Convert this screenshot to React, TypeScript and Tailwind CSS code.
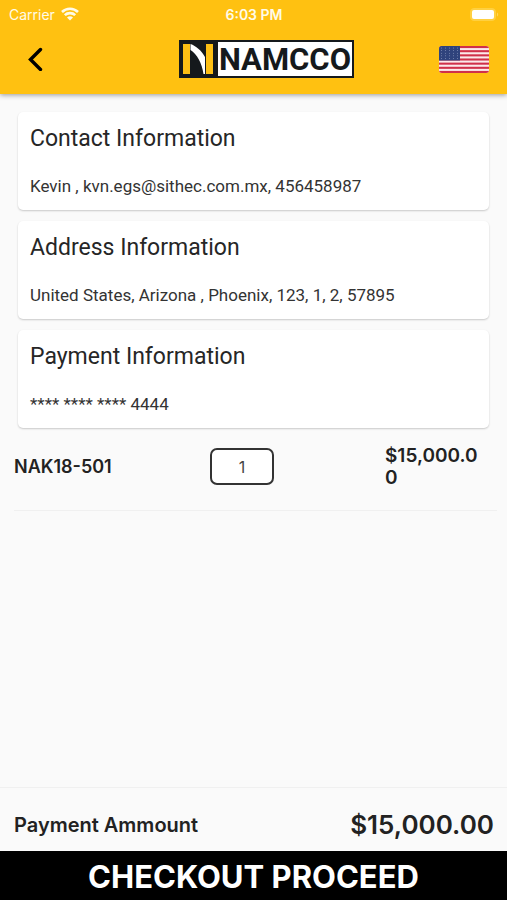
import { useState } from 'react';

const sections = [
  { title: 'Contact Information', detail: 'Kevin , kvn.egs@sithec.com.mx, 456458987' },
  { title: 'Address Information', detail: 'United States, Arizona , Phoenix, 123, 1, 2, 57895' },
  { title: 'Payment Information', detail: '**** **** **** 4444' },
];

function WifiIcon() {
  return (
    <svg width="18" height="14" viewBox="0 0 18 14" aria-hidden="true">
      <g fill="none" stroke="#fffbe8" strokeWidth="2.6">
        <path d="M1 5 C5.500 .6 12.500 .6 17 5" />
        <path d="M3.800 8.200 C6.600 5.400 11.400 5.400 14.200 8.200" />
      </g>
      <path d="M6 10.400 C7.700 8.900 10.300 8.900 12 10.400 L9 13.400 Z" fill="#fffbe8" />
    </svg>
  );
}

function BatteryIcon() {
  return (
    <svg width="29" height="13" viewBox="0 0 29 13" aria-hidden="true">
      <rect x=".5" y=".5" width="25" height="12" rx="3.500" fill="#ffd040" stroke="#ffd040" />
      <rect x="2" y="2" width="22" height="9" rx="2" fill="#fff" />
      <path d="M27 4.500 C28.600 5.200 28.600 7.800 27 8.500 Z" fill="#ffd65c" />
    </svg>
  );
}

function Logo() {
  return (
    <svg width="175" height="38" viewBox="0 0 175 38" role="img" aria-label="Namcco">
      <rect width="175" height="38" fill="#15191c" />
      <rect x="39" y="2" width="134" height="34" fill="#fff" />
      <rect x="4" y="4" width="7" height="30" fill="#fdbf14" />
      <rect x="27" y="4" width="7" height="30" fill="#fdbf14" />
      <path d="M11.500 4 C17 6 22 10 26 17 V34 H24.500 C23 23 18 14 11.500 10 Z" fill="#fff" />
      <text
        x="106"
        y="30"
        textAnchor="middle"
        className="font-[Roboto,sans-serif] text-[31px] font-bold"
        fill="#15191c"
      >
        NAMCCO
      </text>
    </svg>
  );
}

function UsFlag() {
  return (
    <svg width="50" height="27" viewBox="0 0 50 27" aria-hidden="true">
      <clipPath id="flag">
        <rect width="50" height="27" rx="3" />
      </clipPath>
      <g clipPath="url(#flag)">
        <rect width="50" height="27" fill="#fbe9ea" />
        {Array.from({ length: 7 }, (_, i) => (
          <rect key={i} y={(i * 54) / 13} width="50" height={27 / 13} fill="#d0304a" />
        ))}
        <rect width="21" height="14.500" fill="#2f437c" />
        {Array.from({ length: 25 }, (_, i) => (
          <circle key={i} cx={2.5 + (i % 5) * 4} cy={2 + Math.floor(i / 5) * 2.6} r=".5" fill="#8290b8" />
        ))}
      </g>
    </svg>
  );
}

function Header() {
  return (
    <header className="bg-[#ffc111] shadow-[0_1px_5px_rgba(0,0,0,0.4)]">
      <div className="grid h-7 grid-cols-3 items-center pr-2 pl-[9px] text-[14px] text-[#fffbe8]">
        <div className="flex items-center gap-[6px]">
          <span>Carrier</span>
          <WifiIcon />
        </div>
        <span className="text-center font-semibold">6:03 PM</span>
        <div className="flex justify-end">
          <BatteryIcon />
        </div>
      </div>
      <div className="flex h-[66px] items-center justify-between pr-[18px] pb-1 pl-[26px]">
        <button type="button" aria-label="Back" className="w-[68px]">
          <svg width="18" height="24" viewBox="0 0 18 24" aria-hidden="true">
            <path
              d="M14.500 2.500 L4.500 12.500 L14.500 22.500"
              fill="none"
              stroke="#000"
              strokeWidth="3.400"
              strokeLinecap="round"
            />
          </svg>
        </button>
        <Logo />
        <button type="button" aria-label="Change language">
          <UsFlag />
        </button>
      </div>
    </header>
  );
}

function InfoCard({ title, detail }: { title: string; detail: string }) {
  return (
    <section className="rounded-[5px] bg-white px-3 pt-[13px] pb-[13px] font-[Roboto,sans-serif] text-[#262626] shadow-[0_1px_2px_rgba(0,0,0,0.2)]">
      <h2 className="text-[23px] leading-7">{title}</h2>
      <p className="mt-[22px] text-[17px] leading-[22px] text-[#333]">{detail}</p>
    </section>
  );
}

export default function App() {
  const [quantity, setQuantity] = useState('1');

  return (
    <div className="flex min-h-screen flex-col bg-[#fafafa] font-[Inter,sans-serif] text-[#222]">
      <Header />

      <main className="flex-1">
        <div className="flex flex-col gap-[11px] px-[18px] pt-[18px]">
          {sections.map((section) => (
            <InfoCard key={section.title} title={section.title} detail={section.detail} />
          ))}
        </div>

        <div className="mr-[10px] ml-[14px] grid h-[83px] grid-cols-[196fr_175fr_112fr] items-center border-b border-[#f0f0f0] pb-[5px]">
          <label htmlFor="quantity" className="text-[18px] font-semibold">
            NAK18-501
          </label>
          <input
            id="quantity"
            type="text"
            inputMode="numeric"
            value={quantity}
            onChange={(e) => setQuantity(e.target.value)}
            className="h-[37px] w-16 rounded-[7px] border-2 border-[#333] bg-white text-center text-[16px] text-[#444]"
          />
          <span className="pr-3 text-[19px] leading-[22px] font-semibold break-all">$15,000.00</span>
        </div>
      </main>

      <footer>
        <div className="flex h-16 items-center justify-between border-t border-[#f0f0f0] pt-[10px] pr-[13px] pl-[14px]">
          <span className="text-[20px] font-semibold">Payment Ammount</span>
          <span className="text-[26px] font-semibold">$15,000.00</span>
        </div>
        <button type="button" className="block h-[49px] w-full bg-black pt-[2px] text-[31px] leading-[47px] font-bold text-white">
          CHECKOUT PROCEED
        </button>
      </footer>
    </div>
  );
}
